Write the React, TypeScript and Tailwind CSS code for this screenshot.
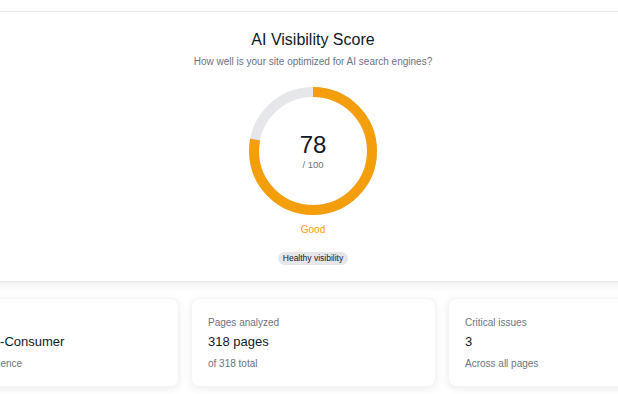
import React from 'react';

type Stat = {
  label: string;
  value: string;
  note: string;
};

const stats: Stat[] = [
  { label: 'Site type', value: 'Direct-to-Consumer', note: 'Target audience' },
  { label: 'Pages analyzed', value: '318 pages', note: 'of 318 total' },
  { label: 'Critical issues', value: '3', note: 'Across all pages' },
];

function ScoreRing({ score }: { score: number }) {
  const r = 59;
  const c = 2 * Math.PI * r;
  const filled = (score / 100) * c;

  return (
    <div className="relative h-[128px] w-[128px]">
      <svg width="128" height="128" viewBox="0 0 128 128" className="-rotate-90">
        <circle cx="64" cy="64" r={r} fill="none" stroke="#e5e7eb" strokeWidth="10" />
        <circle
          cx="64"
          cy="64"
          r={r}
          fill="none"
          stroke="#f59e0b"
          strokeWidth="10"
          strokeDasharray={`${filled} ${c}`}
        />
      </svg>
      <div className="absolute inset-0 flex flex-col items-center justify-center">
        <span className="text-[24px] leading-[28px] text-gray-900">{score}</span>
        <span className="text-[9.5px] leading-[12px] text-gray-500">/ 100</span>
      </div>
    </div>
  );
}

export default function App() {
  return (
    <div className="h-[394px] w-[618px] overflow-hidden bg-white font-['Liberation_Sans',Arial,sans-serif]">
      <div className="ml-[-87px] w-[800px] pt-[11px]">
        <div className="flex flex-col items-center rounded-xl border border-gray-200 bg-white px-6 pb-[16px] pt-[14px] shadow-[0_4px_10px_rgba(0,0,0,0.06)]">
          <h1 className="text-[16px] leading-[28px] text-gray-900">AI Visibility Score</h1>
          <p className="text-[10px] leading-[16px] text-gray-500">How well is your site optimized for AI search engines?</p>
          <div className="mt-[17px]">
            <ScoreRing score={78} />
          </div>
          <p className="mt-[7px] text-[10px] leading-[16px] text-amber-500">Good</p>
          <span className="mt-[14px] rounded-full bg-gray-200 px-[5px] text-[8.5px] font-medium leading-[13px] text-gray-900">
            Healthy visibility
          </span>
        </div>

        <div className="ml-[21px] mt-[16px] grid w-[759px] grid-cols-3 gap-3">
          {stats.map((s) => (
            <div
              key={s.label}
              className="rounded-lg border border-gray-100 bg-white px-4 pb-[14px] pt-[16px] shadow-[0_2px_8px_rgba(0,0,0,0.08)]"
            >
              <p className="text-[10px] leading-[16px] text-gray-500">{s.label}</p>
              <p className="mt-[1px] text-[13px] leading-[20px] text-gray-900">{s.value}</p>
              <p className="mt-[4px] text-[10px] leading-[16px] text-gray-500">{s.note}</p>
            </div>
          ))}
        </div>
      </div>
    </div>
  );
}
